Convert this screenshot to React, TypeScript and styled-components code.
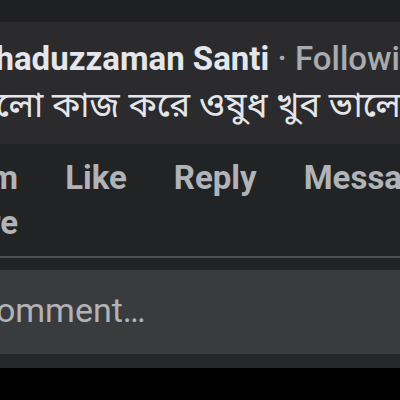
import { createGlobalStyle, styled } from "styled-components";

const GlobalStyle = createGlobalStyle`
  html, body {
    margin: 0;
    padding: 0;
    background: #000;
  }
  body {
    font-family: Roboto, "Noto Sans", "Noto Sans Bengali", "Liberation Sans", sans-serif;
  }
`;

const App = () => {
  return (
    <>
      <GlobalStyle />
      <Screen>
        <TopBar />
        <Bubble>
          <NameLine $shift={-61}>
            Shahaduzzaman Santi
            <Follow> · Following</Follow>
          </NameLine>
          <BodyLine $shift={-38}>ভালো কাজ করে ওষুধ খুব ভালো</BodyLine>
        </Bubble>
        <Actions>
          <ActionRow $shift={-59}>
            <TimeCol>
              <span>2m</span>
              <span>More</span>
            </TimeCol>
            <Action>Like</Action>
            <Action>Reply</Action>
            <Action>Message</Action>
          </ActionRow>
        </Actions>
        <Divider />
        <Gap />
        <InputBox>
          <Placeholder $shift={-136}>Write a comment…</Placeholder>
        </InputBox>
        <BottomBand />
      </Screen>
    </>
  );
};

export default App;

const Screen = styled.div`
  width: 400px;
  height: 400px;
  overflow: hidden;
  background: #000;
  display: flex;
  flex-direction: column;
`;

const TopBar = styled.div`
  height: 22px;
  flex-shrink: 0;
  background: #1f2023;
`;

const Bubble = styled.div`
  height: 122px;
  flex-shrink: 0;
  background: #2b2b2d;
  padding-top: 20px;
  box-sizing: border-box;
  white-space: nowrap;
`;

const NameLine = styled.div<{ $shift: number }>`
  margin-left: ${({ $shift }) => $shift}px;
  font-size: 33px;
  font-weight: 700;
  line-height: 34px;
  color: #e4e6eb;
`;

const Follow = styled.span`
  font-weight: 500;
  color: #a8abb0;
`;

const BodyLine = styled.div<{ $shift: number }>`
  margin-left: ${({ $shift }) => $shift}px;
  margin-top: 8px;
  font-size: 35px;
  line-height: 44px;
  color: #e4e6eb;
`;

const Actions = styled.div`
  height: 112px;
  flex-shrink: 0;
  background: #222325;
  padding-top: 11px;
  box-sizing: border-box;
`;

const ActionRow = styled.div<{ $shift: number }>`
  display: flex;
  gap: 47px;
  margin-left: ${({ $shift }) => $shift}px;
  font-size: 33px;
  font-weight: 700;
  line-height: 45px;
  color: #b0b3b8;
  white-space: nowrap;
`;

const TimeCol = styled.div`
  display: flex;
  flex-direction: column;
  align-items: flex-end;
`;

const Action = styled.span``;

const Divider = styled.div`
  height: 2px;
  flex-shrink: 0;
  background: #4e4f52;
`;

const Gap = styled.div`
  height: 12px;
  flex-shrink: 0;
  background: #222325;
`;

const InputBox = styled.div`
  height: 84px;
  flex-shrink: 0;
  background: #3a3b3d;
  display: flex;
  align-items: center;
  padding-bottom: 4px;
  box-sizing: border-box;
  white-space: nowrap;
`;

const Placeholder = styled.div<{ $shift: number }>`
  margin-left: ${({ $shift }) => $shift}px;
  font-size: 34px;
  color: #b0b3b8;
`;

const BottomBand = styled.div`
  height: 14px;
  flex-shrink: 0;
  background: #262729;
`;
